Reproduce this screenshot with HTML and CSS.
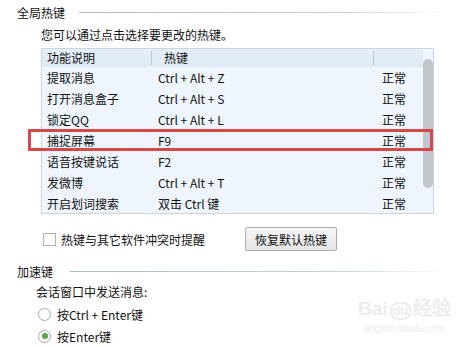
FILE: index.html
```html
<!DOCTYPE html>
<html lang="zh-CN">
<head>
<meta charset="utf-8">
<link rel="stylesheet" href="styles.css">
</head>
<body>
<div class="page">
  <div class="sec-title"><span>全局热键</span><i class="rule"></i></div>
  <div class="desc">您可以通过点击选择要更改的热键。</div>
  <div class="table-wrap">
    <div class="table">
      <div class="grid">
        <div class="row head"><div class="c1">功能说明</div><div class="c2">热键</div><div class="c3"></div></div>
        <div class="row"><div class="c1">提取消息</div><div class="c2">Ctrl + Alt + Z</div><div class="c3">正常</div></div>
        <div class="row"><div class="c1">打开消息盒子</div><div class="c2">Ctrl + Alt + S</div><div class="c3">正常</div></div>
        <div class="row"><div class="c1">锁定QQ</div><div class="c2">Ctrl + Alt + L</div><div class="c3">正常</div></div>
        <div class="row"><div class="c1">捕捉屏幕</div><div class="c2">F9</div><div class="c3">正常</div></div>
        <div class="row"><div class="c1">语音按键说话</div><div class="c2">F2</div><div class="c3">正常</div></div>
        <div class="row"><div class="c1">发微博</div><div class="c2">Ctrl + Alt + T</div><div class="c3">正常</div></div>
        <div class="row"><div class="c1">开启划词搜索</div><div class="c2">双击 Ctrl 键</div><div class="c3">正常</div></div>
      </div>
      <div class="scroll"><div class="thumb"></div></div>
    </div>
    <div class="highlight"></div>
  </div>
  <div class="opts">
    <label class="check"><span class="box"></span><span>热键与其它软件冲突时提醒</span></label>
    <button class="btn">恢复默认热键</button>
  </div>
  <div class="sec-title sec2"><span>加速键</span><i class="rule"></i></div>
  <div class="sub">会话窗口中发送消息:</div>
  <div class="radio"><span class="dot"></span><span>按Ctrl + Enter键</span></div>
  <div class="radio"><span class="dot on"></span><span>按Enter键</span></div>
  <div class="watermark"><div class="wm1">Bai<span class="du">du</span>经验</div><div class="wm2">jingyan.baidu.com</div></div>
</div>
</body>
</html>
```
FILE: styles.css
```css
html, body { margin: 0; padding: 0; background: #fff; }
body { width: 475px; height: 347px; overflow: hidden; font-family: "Noto Sans CJK SC", "Microsoft YaHei", sans-serif; font-size: 12px; color: #111; }
.page { position: relative; height: 347px; }
.sec-title { display: flex; align-items: center; margin: 5px 27px 0 17px; height: 16px; line-height: 16px; }
.sec-title .rule { flex: 1; height: 1px; margin-left: 14px; margin-top: -2px; background: linear-gradient(to right, #a9bcc4, #c6d3d8 70%, rgba(230,236,238,0)); }
.sec2 { margin-top: 13px; }
.sec2 .rule { margin-left: 17px; }
.desc { margin: 6px 0 0 41px; line-height: 16px; }
.table-wrap { position: relative; margin: 5px 0 0 41px; width: 393px; }
.table { display: flex; border: 1px solid #c9d6e2; background: #eef5fc; height: 164px; }
.grid { flex: 1; }
.row { display: flex; height: 21px; line-height: 21px; }
.row.head { height: 18px; line-height: 18px; background: linear-gradient(#e6eff8, #dde9f5); }
.c1 { width: 104px; padding-left: 5px; }
.c2 { width: 209px; padding-left: 7px; }
.c3 { flex: 1; padding-left: 15px; }
.head .c2, .head .c3 { position: relative; }
.head .c2::before, .head .c3::before { content: ""; position: absolute; left: 0; top: 2px; height: 14px; width: 1px; background: #b9c9d8; }
.head .c2 { padding-left: 13px; }
.scroll { width: 10px; padding-top: 10px; background: #eef5fc; }
.thumb { height: 129px; background: #c2c6ca; border-radius: 5px; }
.highlight { position: absolute; left: -13px; top: 81px; width: 399px; height: 16px; border: 3px solid #d8474a; }
.opts { display: flex; align-items: center; margin: 13px 0 0 43px; height: 24px; }
.check { display: flex; align-items: center; width: 202px; }
.box { width: 11px; height: 11px; border: 1px solid #b0b0b0; background: #fff; margin-right: 5px; }
.btn { width: 92px; height: 24px; padding: 0; border: 1px solid #adadad; border-radius: 2px; background: linear-gradient(#f5f5f5, #e6e6e6); font-family: inherit; font-size: 12px; color: #111; }
.sub { margin: 4px 0 0 36px; line-height: 16px; }
.radio { display: flex; align-items: center; margin: 6px 0 0 38px; height: 16px; }
.radio + .radio { margin-top: 6px; }
.dot { width: 11px; height: 11px; border: 1px solid #aaa; border-radius: 50%; background: #fff; margin-right: 6px; position: relative; }
.dot.on::after { content: ""; position: absolute; left: 2.5px; top: 2.5px; width: 6px; height: 6px; border-radius: 50%; background: #5aa843; }
.watermark { position: absolute; left: 358px; top: 293px; color: #ededed; font-family: "Liberation Sans", sans-serif; text-align: center; }
.wm1 { font-size: 19px; font-weight: bold; line-height: 22px; }
.du { display: inline-block; border: 2px solid #ededed; border-radius: 8px; font-size: 13px; line-height: 14px; padding: 0 1px; margin: 0 2px; }
.wm2 { font-size: 10px; line-height: 14px; margin-top: 2px; }
```
